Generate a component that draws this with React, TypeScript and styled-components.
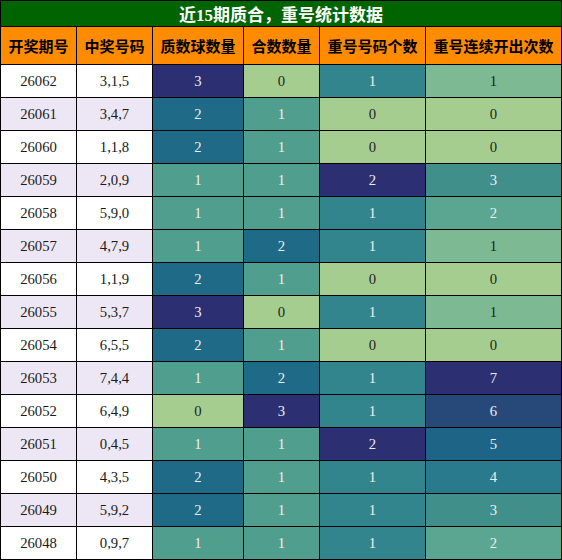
import styled, { createGlobalStyle } from "styled-components";

const GlobalStyle = createGlobalStyle`
  html, body {
    margin: 0;
    padding: 0;
    background: #fff;
  }
`;

// seaborn "crest" style scale, light -> dark
const STOPS: [number, number[]][] = [
  [0, [165, 205, 144]],
  [1 / 7, [125, 186, 147]],
  [2 / 7, [90, 166, 144]],
  [1 / 3, [79, 158, 142]],
  [3 / 7, [64, 143, 138]],
  [1 / 2, [51, 133, 141]],
  [4 / 7, [40, 122, 140]],
  [2 / 3, [31, 106, 135]],
  [5 / 7, [30, 100, 135]],
  [6 / 7, [39, 73, 122]],
  [1, [44, 48, 114]],
];

function crest(t: number) {
  for (let i = 1; i < STOPS.length; i++) {
    const [t1, c1] = STOPS[i];
    const [t0, c0] = STOPS[i - 1];
    if (t <= t1) {
      const k = (t - t0) / (t1 - t0 || 1);
      const c = c0.map((v, j) => Math.round(v + (c1[j] - v) * k));
      return `rgb(${c[0]},${c[1]},${c[2]})`;
    }
  }
  return "rgb(44,48,114)";
}

const rows: [string, string, number, number, number, number][] = [
  ["26062", "3,1,5", 3, 0, 1, 1],
  ["26061", "3,4,7", 2, 1, 0, 0],
  ["26060", "1,1,8", 2, 1, 0, 0],
  ["26059", "2,0,9", 1, 1, 2, 3],
  ["26058", "5,9,0", 1, 1, 1, 2],
  ["26057", "4,7,9", 1, 2, 1, 1],
  ["26056", "1,1,9", 2, 1, 0, 0],
  ["26055", "5,3,7", 3, 0, 1, 1],
  ["26054", "6,5,5", 2, 1, 0, 0],
  ["26053", "7,4,4", 1, 2, 1, 7],
  ["26052", "6,4,9", 0, 3, 1, 6],
  ["26051", "0,4,5", 1, 1, 2, 5],
  ["26050", "4,3,5", 2, 1, 1, 4],
  ["26049", "5,9,2", 2, 1, 1, 3],
  ["26048", "0,9,7", 1, 1, 1, 2],
];

const headers = ["开奖期号", "中奖号码", "质数球数量", "合数数量", "重号号码个数", "重号连续开出次数"];
const maxima = [3, 3, 2, 7];

const Table = styled.div`
  box-sizing: border-box;
  width: 562px;
  display: grid;
  grid-template-columns: 75px 75px 90px 75px 105px 135px;
  grid-template-rows: 25px 37px repeat(15, 32px);
  gap: 1px;
  padding: 1px;
  background: #000;
  font-family: "Liberation Serif", "Noto Sans CJK SC", serif;
`;

const Title = styled.div`
  grid-column: 1 / -1;
  background: #006400;
  color: #fff;
  font-size: 17px;
  font-weight: 700;
  display: flex;
  align-items: center;
  justify-content: center;
`;

const Head = styled.div`
  background: #ff8c00;
  color: #000;
  font-family: "Noto Sans CJK SC", sans-serif;
  font-size: 15px;
  font-weight: 700;
  display: flex;
  align-items: center;
  justify-content: center;
  white-space: nowrap;
`;

const Cell = styled.div<{ $bg: string; $fg: string }>`
  background: ${(p) => p.$bg};
  color: ${(p) => p.$fg};
  font-size: 14.7px;
  display: flex;
  align-items: center;
  justify-content: center;
`;

export default function App() {
  return (
    <>
      <GlobalStyle />
      <Table>
        <Title>近15期质合，重号统计数据</Title>
        {headers.map((h) => (
          <Head key={h}>{h}</Head>
        ))}
        {rows.map((r, i) => {
          const base = i % 2 === 0 ? "#ffffff" : "#ede7f5";
          return [
            <Cell key={`${r[0]}a`} $bg={base} $fg="#1a1a1a">{r[0]}</Cell>,
            <Cell key={`${r[0]}b`} $bg={base} $fg="#1a1a1a">{r[1]}</Cell>,
            ...[r[2], r[3], r[4], r[5]].map((v, j) => {
              const t = v / maxima[j];
              return (
                <Cell
                  key={`${r[0]}${j}`}
                  $bg={crest(t)}
                  $fg={t < 0.2 ? "#1f1f1f" : "#eeeeee"}
                >
                  {v}
                </Cell>
              );
            }),
          ];
        })}
      </Table>
    </>
  );
}
